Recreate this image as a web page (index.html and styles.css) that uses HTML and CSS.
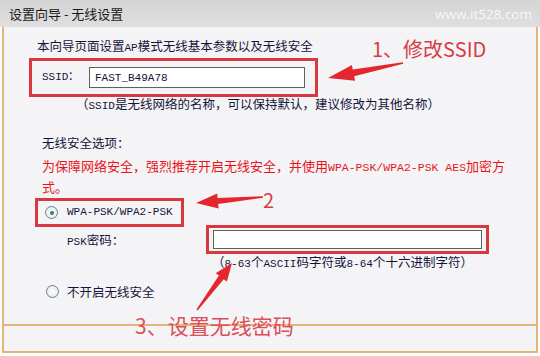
FILE: index.html
```html
<!DOCTYPE html>
<html lang="zh-CN">
<head>
    <meta charset="UTF-8">
    <title>设置向导 - 无线设置</title>
    <link rel="stylesheet" href="styles.css">
</head>
<body>

<div class="panel">
    <div class="head">
        <span class="headTitle">设置向导 - 无线设置</span>
        <span class="site">www.it528.com</span>
    </div>
    <div class="body">
        <p class="intro">本向导页面设置<span class="en">AP</span>模式无线基本参数以及无线安全</p>
        <div class="ssidBox mark">
            <span class="en ssidLabel">SSID：</span>
            <input class="ssidInput en" type="text" value="FAST_B49A78">
        </div>
        <p class="note noteSsid">（<span class="en">SSID</span>是无线网络的名称，可以保持默认，建议修改为其他名称）</p>
        <p class="secLabel">无线安全选项：</p>
        <p class="warn">为保障网络安全，强烈推荐开启无线安全，并使用<span class="en">WPA-PSK/WPA2-PSK AES</span>加密方<br>式。</p>
        <div class="wpaBox mark">
            <span class="radio checked"></span>
            <span class="en">WPA-PSK/WPA2-PSK</span>
        </div>
        <div class="pskRow">
            <span class="pskLabel"><span class="en">PSK</span>密码：</span>
            <span class="pskBox mark"><input class="pskInput" type="text"></span>
        </div>
        <p class="note notePsk">（<span class="en">8-63</span>个<span class="en">ASCII</span>码字符或<span class="en">8-64</span>个十六进制字符）</p>
        <div class="offRow">
            <span class="radio"></span>
            <span>不开启无线安全</span>
        </div>
    </div>
    <div class="foot"></div>

    <!-- 标注 -->
    <div class="tip tip1">1、修改SSID</div>
    <div class="tip tip2">2</div>
    <div class="tip tip3">3、设置无线密码</div>
    <svg class="arrows" width="540" height="356" viewBox="0 0 540 356">
        <polygon points="328,78 351.9,65.1 352.8,69.5 402.8,62.2 403.2,63.8 354.2,76.3 355.1,80.7"/>
        <polygon points="196,203 217.2,193.5 217.6,198 262.9,196.2 263.1,197.8 218.2,204 218.6,208.5"/>
        <polygon points="232,263 215.7,273.2 218.9,275.6 196.4,309.5 197.6,310.5 223.7,279.2 226.9,281.6"/>
    </svg>
</div>

</body>
</html>
```

FILE: styles.css
```css
* {
    box-sizing: border-box;
}

body {
    margin: 0;
    background-color: #ffffff;
    font-family: "Noto Sans CJK SC", sans-serif;
    font-size: 12.5px;
    color: #14143a;
}

p {
    margin: 0;
}

.en {
    font-family: "Liberation Mono", monospace;
    font-size: 11px;
    line-height: 1;
}

.panel {
    position: relative;
    width: 540px;
    height: 356px;
}

.head {
    height: 27px;
    display: flex;
    align-items: center;
    justify-content: space-between;
    padding: 0 8px 0 9px;
    background: linear-gradient(#d4d4d4, #dfdfdf);
}

.headTitle {
    font-size: 13px;
    color: #1a1a1a;
}

.site {
    font-family: "Open Sans", sans-serif;
    font-size: 13.5px;
    color: #f7f7f7;
}

.body {
    height: 297px;
    margin: 0 2px;
    padding: 10px 0 0 25px;
    background-color: #f4f4f6;
    border-left: 2px solid #e3b578;
    border-right: 2px solid #e3b578;
}

.foot {
    height: 29px;
    margin: 0 2px;
    background-color: #f4f4f6;
    border: 2px solid #e3b578;
}

.mark {
    border: 3px solid #d8383f;
}

.intro {
    margin-left: 8px;
    height: 18px;
    line-height: 18px;
}

.ssidBox {
    display: flex;
    align-items: center;
    width: 289px;
    height: 39px;
    margin-top: 3px;
    padding: 0 10px;
}

.ssidLabel {
    width: 47px;
}

.ssidInput {
    width: 216px;
    height: 21px;
    padding: 0 5px;
    border: 1px solid #56665e;
    background-color: #ffffff;
    color: #10103a;
}

.note {
    height: 14px;
    line-height: 14px;
}

.noteSsid {
    margin-left: 47px;
}

.secLabel {
    margin: 23px 0 0 13px;
    height: 18px;
    line-height: 18px;
}

.warn {
    margin: 3px 0 0 13px;
    height: 42px;
    line-height: 21px;
    font-size: 13px;
    color: #e8141c;
}

.warn .en {
    font-size: 11.5px;
}

.radio {
    display: inline-block;
    width: 13px;
    height: 13px;
    border: 1px solid #6d7f98;
    border-radius: 50%;
    background: radial-gradient(#ffffff, #dde2ea);
    position: relative;
}

.radio.checked::after {
    content: "";
    position: absolute;
    left: 3.5px;
    top: 3.5px;
    width: 4px;
    height: 4px;
    border-radius: 50%;
    background-color: #2f8a3a;
}

.wpaBox {
    display: flex;
    align-items: center;
    gap: 9px;
    width: 149px;
    height: 29px;
    margin: 1px 0 0 6px;
    padding-left: 7px;
}

.pskRow {
    display: flex;
    align-items: center;
    margin-top: -2px;
}

.pskLabel {
    width: 139px;
    margin-left: 38px;
}

.pskBox {
    display: block;
    width: 283px;
    height: 29px;
    padding: 2px 4px;
}

.pskInput {
    display: block;
    width: 269px;
    height: 19px;
    border: 1px solid #56665e;
    background-color: #ffffff;
}

.notePsk {
    margin: 1px 0 0 183px;
}

.offRow {
    display: flex;
    align-items: center;
    gap: 8px;
    margin: 13px 0 0 17px;
    height: 18px;
}

.tip {
    position: absolute;
    color: #d63c46;
    font-size: 20px;
    line-height: 24px;
}

.tip1 {
    left: 372px;
    top: 37px;
}

.tip2 {
    left: 263px;
    top: 188px;
}

.tip3 {
    left: 135px;
    top: 313px;
    font-size: 21px;
    color: #dc4e58;
}

.arrows {
    position: absolute;
    left: 0;
    top: 0;
    fill: #e4262e;
}
```
